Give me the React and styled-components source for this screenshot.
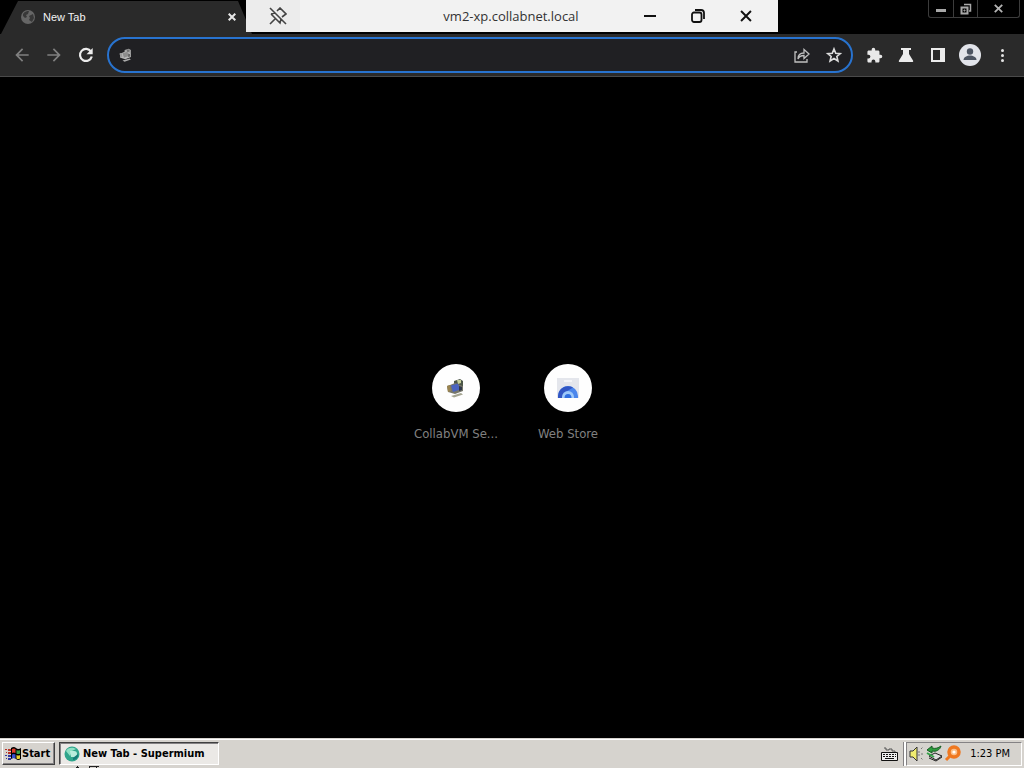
import React from "react";
import styled, { createGlobalStyle, css } from "styled-components";

const Global = createGlobalStyle`
  * { box-sizing: border-box; }
  html, body, #root { height: 100%; margin: 0; }
  body { background: #000; overflow: hidden; font-family: "DejaVu Sans Condensed", "Liberation Sans", sans-serif; }
  button { font: inherit; color: inherit; border: 0; padding: 0; margin: 0; background: none; }
  svg { display: block; flex: none; }
`;

const Screen = styled.div`
  position: relative;
  display: flex;
  flex-direction: column;
  min-height: 100vh;
  background: #000;
`;

const TabStrip = styled.header`
  display: flex;
  justify-content: space-between;
  align-items: flex-start;
  height: 34px;
  padding-right: 4px;
`;

const Tab = styled.div`
  display: flex;
  align-items: center;
  width: 252px;
  height: 34px;
  padding: 0 12px 0 20px;
  background: #2a2a2a;
  color: #f4f4f4;
  clip-path: polygon(18px 1px, 238px 1px, 252px 34px, 1px 34px);
`;

const TabTitle = styled.span`
  flex: 1;
  padding-left: 7px;
  font: 11px/16px "Liberation Sans", sans-serif;
`;

const TabClose = styled.button`
  display: grid;
  place-items: center;
  width: 16px;
  height: 16px;
`;

const WindowControls = styled.div`
  display: flex;
  height: 18px;
  border: 1px solid #3c3c3c;
  border-top: 0;
  border-radius: 0 0 3px 3px;
`;

const WindowButton = styled.button`
  display: grid;
  place-items: center;
  width: ${(p) => (p.$wide ? 42 : 24)}px;
  height: 17px;
  & + & { border-left: 1px solid #3c3c3c; }
`;

const Toolbar = styled.nav`
  display: flex;
  align-items: center;
  height: 43px;
  padding: 0 6px;
  background: #2a2a2a;
  border-bottom: 1px solid #4a4a4a;
`;

const ToolButton = styled.button`
  display: grid;
  place-items: center;
  width: 32px;
  height: 32px;
`;

const Omnibox = styled.div`
  display: flex;
  align-items: center;
  flex: 1;
  height: 36px;
  margin: 0 5px;
  padding: 0 1px 0 10px;
  border: 2px solid #2873cf;
  border-radius: 18px;
  background: #202023;
`;

const Address = styled.input`
  flex: 1;
  min-width: 0;
  margin-left: 8px;
  border: 0;
  outline: 0;
  background: transparent;
  color: #eee;
  font: 14px "Noto Sans", sans-serif;
`;

const ConnectionBar = styled.div`
  position: absolute;
  top: 0;
  left: 50%;
  transform: translateX(-50%);
  display: flex;
  align-items: center;
  width: 532px;
  height: 32px;
  background: #f2f2f2;
  color: #333;
`;

const PinButton = styled.button`
  display: grid;
  place-items: center;
  width: 54px;
  height: 32px;
  padding-left: 10px;
  background: #ececec;
`;

const ConnectionName = styled.span`
  flex: 1;
  padding-left: 96px;
  text-align: center;
  font: 13px/32px "Open Sans", sans-serif;
`;

const BarButton = styled.button`
  display: grid;
  place-items: center;
  width: 48px;
  height: 32px;
  &:last-child { margin-right: 8px; }
`;

const NewTabPage = styled.main`
  flex: 1;
  display: flex;
  align-items: center;
  justify-content: center;
  padding-bottom: 7px;
`;

const Shortcut = styled.a`
  display: flex;
  flex-direction: column;
  align-items: center;
  width: 112px;
  height: 112px;
  padding-top: 16px;
  color: #808080;
  text-decoration: none;
`;

const ShortcutIcon = styled.span`
  display: grid;
  place-items: center;
  width: 48px;
  height: 48px;
  border-radius: 50%;
  background: #fefefe;
`;

const ShortcutLabel = styled.span`
  margin-top: 14px;
  font: 13px/16px "DejaVu Sans Condensed", sans-serif;
`;

const Taskbar = styled.footer`
  position: relative;
  display: flex;
  align-items: center;
  height: 30px;
  padding: 0 2px;
  background: #d6d3ce;
  border-top: 1px solid #d6d3ce;
  box-shadow: inset 0 1px #fff;
  color: #000;
  font-size: 11px;
`;

const raised = css`
  border: 1px solid;
  border-color: #fff #404040 #404040 #fff;
  box-shadow: inset -1px -1px #848284;
`;

const StartButton = styled.button`
  ${raised}
  display: flex;
  align-items: center;
  width: 53px;
  height: 23px;
  padding-left: 1px;
  font-weight: bold;
`;

const TaskButton = styled.button`
  display: flex;
  align-items: center;
  gap: 3px;
  width: 160px;
  height: 23px;
  margin-left: 4px;
  padding-left: 4px;
  border: 1px solid;
  border-color: #404040 #fff #fff #404040;
  box-shadow: inset 1px 1px #848284;
  background: #ebe9e6;
  font-weight: bold;
`;

const Tray = styled.div`
  display: flex;
  align-items: center;
  gap: 1px;
  height: 24px;
  margin-left: 4px;
  padding: 0 11px 0 2px;
  border: 1px solid;
  border-color: #848284 #fff #fff #848284;
  box-shadow: -2px 0 #fff, -3px 0 #848284;
`;

const Clock = styled.time`
  padding-left: 8px;
`;

const KeyboardButton = styled.button`
  margin-left: auto;
  padding-right: 4px;
`;

const PointerTrace = styled.svg`
  position: absolute;
  left: 76px;
  bottom: 0;
`;

const CameraIcon = ({ size, gray }) => (
  <svg width={size} height={size} viewBox="0 0 20 20">
    <path d="M8 3l6-2 3 2v5l-5 2-4-3z" fill={gray ? "#a4a4a4" : "#4c5648"} />
    <path d="M1 8l3-1 5-2 8 3v5l-8 3-7-2z" fill={gray ? "#b8b8b8" : "#77776a"} />
    <path d="M5 7.500l7-2 2 6-7 2.500z" fill={gray ? "#8c8c8c" : "#4a63c0"} />
    <path d="M1 8l3-1 1 6-3 1z" fill={gray ? "#999" : "#9a8450"} />
    <path d="M11 2l4 0 0 3-3 1z" fill={gray ? "#707070" : "#c7cf9a"} />
    <path d="M13 8l3 1v3l-3 1z" fill={gray ? "#666" : "#30384a"} />
    <path d="M5 18l10-3 2 1.500-9 3z" fill={gray ? "#aaa" : "#a5a592"} />
  </svg>
);

const Globe = () => (
  <svg width="16" height="16" viewBox="0 0 16 16">
    <circle cx="8" cy="8" r="7" fill="#666" />
    <path d="M3 5c2-3 4-3 6-3L8 5 6 6l1 2-2 1-2-2zM9 7l4-2 1 4-2 4-3-2 1-2z" fill="#383838" />
  </svg>
);

const Cross = ({ size = 8, w = 2, color = "#e8e8e8" }) => (
  <svg width={size} height={size} viewBox="0 0 8 8">
    <path d="M.7.7l6.600 6.600M7.300.7L.7 7.300" stroke={color} strokeWidth={w} fill="none" />
  </svg>
);

const Glyph = ({ d, size = 20, color = "#e8e8e8" }) => (
  <svg width={size} height={size} viewBox="0 0 24 24" fill={color}>
    <path d={d} />
  </svg>
);

const WindowsLogo = () => (
  <svg width="18" height="16" viewBox="0 0 18 16">
    <path d="M7 2q3-2 5 0t5 0v11q-3 2-5 0t-5 0z" fill="#000" />
    <path d="M8 3q2-1 3.500 0v4q-2-1-3.500 0z" fill="#e0402c" />
    <path d="M12.500 4q2 1 3.500 0v3.500q-2 1-3.500 0z" fill="#38a048" />
    <path d="M8 8.500q2-1 3.500 0v4q-2-1-3.500 0z" fill="#3850d0" />
    <path d="M12.500 9q2 1 3.500 0v3.500q-2 1-3.500 0z" fill="#e8d030" />
    <path d="M1 3h2v1H1zM4 3h3v2H4zM2 6h1v1H2zM4 6h3v2H4z" fill="#b83428" />
    <path d="M1 9h2v1H1zM4 9h3v2H4zM2 12h1v1H2zM4 12h3v2H4z" fill="#3038a0" />
  </svg>
);

export default function App() {
  return (
    <Screen>
      <Global />
      <TabStrip>
        <Tab>
          <Globe />
          <TabTitle>New Tab</TabTitle>
          <TabClose aria-label="Close tab"><Cross /></TabClose>
        </Tab>
        <WindowControls>
          <WindowButton aria-label="Minimize">
            <svg width="12" height="12"><path d="M1 6h10v3H1z" fill="#a8a8a8" /></svg>
          </WindowButton>
          <WindowButton aria-label="Restore">
            <svg width="12" height="12" fill="none" stroke="#a8a8a8">
              <path d="M4 1.500h6.500V8H9" strokeWidth="1.500" />
              <path d="M1.500 4.500h6v6h-6z" strokeWidth="2" />
              <path d="M4 7h1v1H4z" />
            </svg>
          </WindowButton>
          <WindowButton $wide aria-label="Close"><Cross w={1.6} size={9} color="#b4b4b4" /></WindowButton>
        </WindowControls>
      </TabStrip>

      <Toolbar>
        <ToolButton aria-label="Back">
          <Glyph color="#808080" d="M20 11H7.800l5.600-5.600L12 4l-8 8 8 8 1.400-1.400L7.800 13H20z" />
        </ToolButton>
        <ToolButton aria-label="Forward">
          <Glyph color="#808080" d="M12 4l-1.400 1.400 5.600 5.600H4v2h12.200l-5.600 5.600L12 20l8-8z" />
        </ToolButton>
        <ToolButton aria-label="Reload">
          <svg width="20" height="20" viewBox="0 0 20 20">
            <path d="M15 6.600A6 6 0 1 0 15.800 11.500" fill="none" stroke="#ececec" strokeWidth="2.200" />
            <path d="M16.700 3v6.200h-6.200z" fill="#ececec" />
          </svg>
        </ToolButton>
        <Omnibox>
          <CameraIcon size={14} gray />
          <Address aria-label="Address" />
          <ToolButton aria-label="Share">
            <svg width="18" height="18" viewBox="0 0 18 18" fill="none" stroke="#c0c0c0" strokeWidth="1.300">
              <path d="M4 6H2v10h12v-3" />
              <path d="M5 13c0-4 2-6 6-6V3.500L16 8l-5 4.500v-3c-3 0-5 1-6 3.500z" />
            </svg>
          </ToolButton>
          <ToolButton aria-label="Bookmark">
            <svg width="18" height="18" viewBox="0 0 24 24" fill="none" stroke="#dcdcdc" strokeWidth="2.200">
              <path d="M12 4l2.300 5.600 6 .5-4.500 3.900 1.400 5.900L12 16.700 6.800 19.900 8.200 14 3.700 10.100l6-.5z" />
            </svg>
          </ToolButton>
        </Omnibox>
        <ToolButton aria-label="Extensions">
          <Glyph size={17} d="M20.500 11H19V7c0-1.100-.9-2-2-2h-4V3.500a2.500 2.500 0 0 0-5 0V5H4c-1.100 0-2 .9-2 2v3.800h1.500a2.700 2.700 0 0 1 0 5.400H2V20c0 1.100.9 2 2 2h3.800v-1.500a2.700 2.700 0 0 1 5.400 0V22H17c1.100 0 2-.9 2-2v-4h1.500a2.500 2.500 0 0 0 0-5z" />
        </ToolButton>
        <ToolButton aria-label="Experiments">
          <svg width="16" height="16" viewBox="0 0 16 16" fill="#ececec">
            <path d="M3 1h10v2h-2v4l4 6.500c.6 1-.1 1.500-1 1.500H2c-.9 0-1.600-.5-1-1.500L5 7V3H3z" />
          </svg>
        </ToolButton>
        <ToolButton aria-label="Side panel">
          <svg width="16" height="16" viewBox="0 0 16 16">
            <path d="M1 1h14v14H1zM3 3v10h7V3z" fill="#ececec" fillRule="evenodd" />
          </svg>
        </ToolButton>
        <ToolButton aria-label="Profile">
          <svg width="22" height="22" viewBox="0 0 22 22">
            <circle cx="11" cy="11" r="11" fill="#e2e4ea" />
            <circle cx="11" cy="7.500" r="3.200" fill="#4c5462" />
            <path d="M4.500 16c0-3 3.500-4.500 6.500-4.500s6.500 1.500 6.500 4.500z" fill="#4c5462" />
          </svg>
        </ToolButton>
        <ToolButton aria-label="Menu">
          <svg width="16" height="16" viewBox="0 0 16 16" fill="#e4e4e4">
            <circle cx="8.500" cy="3.500" r="1.500" /><circle cx="8.500" cy="8.500" r="1.500" /><circle cx="8.500" cy="13.500" r="1.500" />
          </svg>
        </ToolButton>
      </Toolbar>

      <NewTabPage>
        <Shortcut href="#collabvm">
          <ShortcutIcon><CameraIcon size={20} /></ShortcutIcon>
          <ShortcutLabel>CollabVM Se...</ShortcutLabel>
        </Shortcut>
        <Shortcut href="#store">
          <ShortcutIcon>
            <svg width="24" height="24" viewBox="0 0 24 24">
              <path d="M1 2h22v20H1z" fill="#e4e6ec" />
              <path d="M8 4h8v2H8z" fill="#f4f5f8" />
              <path d="M2 22v-2a10 10 0 0 1 20 0v2z" fill="#4a86ec" />
              <path d="M2 22v-2a10 10 0 0 1 15-8.500L8 17l-2 5z" fill="#3156c4" />
              <path d="M6 22v-1a6 6 0 0 1 12 0v1z" fill="#9cc8fa" />
              <path d="M8.500 22a3.500 4 0 0 1 7 0z" fill="#2f6ee0" />
            </svg>
          </ShortcutIcon>
          <ShortcutLabel>Web Store</ShortcutLabel>
        </Shortcut>
      </NewTabPage>

      <Taskbar>
        <StartButton><WindowsLogo />Start</StartButton>
        <TaskButton>
          <svg width="16" height="16" viewBox="0 0 16 16">
            <circle cx="8" cy="8" r="7.500" fill="#2fa58c" />
            <path d="M2 5c2-4 7-4 10-2L8 5l-2 5z" fill="#8fe0c4" />
            <path d="M6 5h4a3 3 0 0 1 0 6H7z" fill="#b8ecdc" />
            <path d="M9 12l5-4c1 3-2 6-5 6z" fill="#157a78" />
          </svg>
          New Tab - Supermium
        </TaskButton>
        <KeyboardButton aria-label="Keyboard">
          <svg width="17" height="16" viewBox="0 0 17 16">
            <path d="M3 2h2v2h3V3h3v2h3v2" stroke="#555" fill="none" />
            <path d="M.5 6.500h16v8H.5z" fill="#eee" stroke="#111" />
            <path d="M2 8.500h13M2 10.500h13" stroke="#111" strokeDasharray="2 1" />
            <path d="M4 12.500h9" stroke="#111" />
          </svg>
        </KeyboardButton>
        <Tray>
          <svg width="16" height="16" viewBox="0 0 16 16">
            <path d="M1 5h3l4-4v14l-4-4H1z" fill="#f0ec70" stroke="#333" />
            <path d="M10 5v6M12 3l2-2M12 8h3M12 12l2 2" stroke="#777" strokeDasharray="2 1" />
          </svg>
          <svg width="17" height="17" viewBox="0 0 17 17">
            <path d="M3 11l6-3 7 3-6 4z" fill="#ddd" stroke="#222" />
            <path d="M3 13l7 3 6-4" fill="none" stroke="#222" />
            <path d="M1 5l5-4v2c4 1 6 0 9-2-1 4-5 6-9 5v2z" fill="#2d9c3c" stroke="#185c24" />
            <path d="M1 8l7 4" stroke="#35a348" strokeWidth="2" />
          </svg>
          <svg width="17" height="17" viewBox="0 0 17 17">
            <path d="M7 10l-5 5" stroke="#ef7820" strokeWidth="3" />
            <circle cx="10" cy="7" r="5" fill="#fbc08a" stroke="#ef7820" strokeWidth="3.500" />
            <circle cx="10" cy="7" r="1.600" fill="#fff" />
          </svg>
          <Clock>1:23 PM</Clock>
        </Tray>
        <PointerTrace width="24" height="2" viewBox="0 0 24 2" aria-hidden="true">
          <path d="M1 0h1v1h1v1H0V1h1zM13 0h10v1h-2v1h-1V1h-6v1h-1z" fill="#222" />
        </PointerTrace>
      </Taskbar>

      <ConnectionBar>
        <PinButton aria-label="Unpin">
          <svg width="18" height="18" viewBox="0 0 18 18" fill="none" stroke="#444" strokeWidth="1.600">
            <path d="M1 1l16 16M1 17l5-5M2 7l9 9 1-4M2 7l4-1M8 4l3-3 6 6-4 3" />
          </svg>
        </PinButton>
        <ConnectionName>vm2-xp.collabnet.local</ConnectionName>
        <BarButton aria-label="Minimize connection">
          <svg width="12" height="12"><path d="M0 5h12v2H0z" fill="#111" /></svg>
        </BarButton>
        <BarButton aria-label="Restore connection">
          <svg width="14" height="14" viewBox="0 0 14 14" fill="none" stroke="#111" strokeWidth="1.800">
            <rect x="1" y="3.500" width="9.500" height="9.500" rx="2" />
            <path d="M4 1h6a3 3 0 0 1 3 3v6" />
          </svg>
        </BarButton>
        <BarButton aria-label="Close connection"><Cross size={12} w={1.3} color="#111" /></BarButton>
      </ConnectionBar>
    </Screen>
  );
}
